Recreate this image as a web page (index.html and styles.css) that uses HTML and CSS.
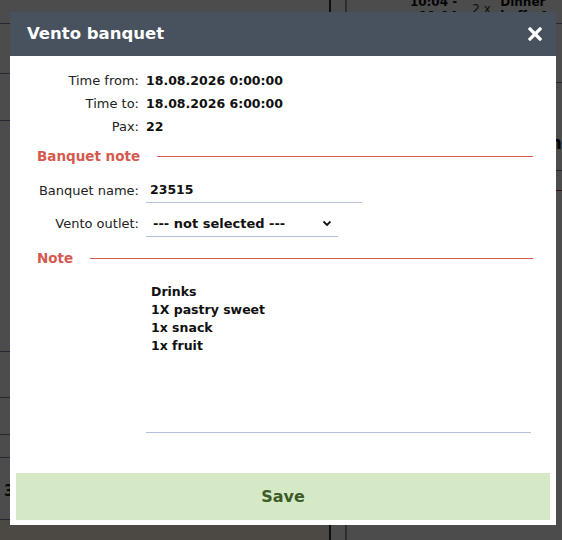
FILE: index.html
```html
<!DOCTYPE html>
<html lang="en">
<head>
  <meta charset="UTF-8">
  <meta name="viewport" content="width=device-width, initial-scale=1.0">
  <title>Vento banquet</title>
  <link rel="stylesheet" href="styles.css">
</head>
<body>
  <!-- schedule page behind the dialog -->
  <div class="page">
    <div class="col-left">
      <div class="row" style="height:24px"></div>
      <div class="row" style="height:50px"></div>
      <div class="row" style="height:47px"></div>
      <div class="row" style="height:231px"></div>
      <div class="row" style="height:46px"></div>
      <div class="row" style="height:37px"></div>
      <div class="row" style="height:23px"></div>
      <div class="row row-num" style="height:62px">3</div>
      <div class="row row-warm" style="height:60px"></div>
    </div>
    <div class="col-gap"></div>
    <div class="col-right">
      <div class="order">
        <div class="order-time">10:04 -<br>11:04</div>
        <div class="order-qty">2 x</div>
        <div class="order-name">Dinner<br>buffe A</div>
      </div>
      <div class="row" style="height:59px"><span class="faint">t</span></div>
      <div class="row" style="height:88px"><b>m</b></div>
      <div class="row row-red" style="height:20px"></div>
    </div>
  </div>

  <div class="overlay"></div>

  <div class="modal">
    <div class="modal-header">
      <h2>Vento banquet</h2>
      <button class="close" aria-label="Close">
        <svg width="14" height="14" viewBox="0 0 14 14"><path d="M2 2L12 12M12 2L2 12" stroke="#fff" stroke-width="3.2" stroke-linecap="square"/></svg>
      </button>
    </div>

    <div class="modal-body">
      <div class="info">
        <span class="label">Time from:</span><span class="value">18.08.2026 0:00:00</span>
        <span class="label">Time to:</span><span class="value">18.08.2026 6:00:00</span>
        <span class="label">Pax:</span><span class="value">22</span>
      </div>

      <div class="section">Banquet note</div>

      <div class="form-row form-row-first">
        <label class="label" for="name">Banquet name:</label>
        <input type="text" id="name" class="field field-name" value="23515">
      </div>
      <div class="form-row">
        <label class="label" for="outlet">Vento outlet:</label>
        <div class="select-wrap">
          <select id="outlet" class="field field-select">
            <option>--- not selected ---</option>
          </select>
          <svg class="chevron" width="10" height="7" viewBox="0 0 10 7"><path d="M1.5 1.5L5 5L8.5 1.5" fill="none" stroke="#111" stroke-width="1.8"/></svg>
        </div>
      </div>

      <div class="section section-note">Note</div>

      <textarea class="note">Drinks
1X pastry sweet
1x snack
1x fruit</textarea>

      <button class="btn-save">Save</button>
    </div>
  </div>
</body>
</html>
```

FILE: styles.css
```css
body {
  margin: 0;
  font-family: "DejaVu Sans", Verdana, sans-serif;
  color: #111;
  background: #fff;
  overflow: hidden;
}

/* page behind */
.page {
  display: flex;
  height: 540px;
  overflow: hidden;
}
.col-left {
  width: 339px;
  display: flex;
  flex-direction: column;
}
.col-gap {
  width: 15px;
  border-left: 2px solid #2a3550;
  border-right: 2px solid #8f9aae;
}
.col-right {
  flex: 1;
  display: flex;
  flex-direction: column;
}
.row {
  flex-shrink: 0;
  border-bottom: 1px solid #7a88a3;
  box-sizing: border-box;
  font-size: 15px;
}
.row-num {
  font-weight: bold;
  padding: 24px 0 0 4px;
}
.row-warm {
  border-bottom: none;
  background: #fff6e8;
}
.row-red {
  border-bottom-color: #a04040;
}
.faint {
  color: #777;
  margin-left: 196px;
  line-height: 70px;
  font-size: 16px;
}
.col-right b {
  margin-left: 196px;
  line-height: 120px;
  font-size: 18px;
}
.order {
  flex-shrink: 0;
  display: flex;
  height: 29px;
  border-bottom: 1px solid #7a88a3;
  box-sizing: border-box;
  font-size: 12px;
  line-height: 14px;
  margin-top: -5px;
}
.order-time {
  width: 110px;
  text-align: right;
  font-weight: bold;
}
.order-qty {
  width: 43px;
  padding: 7px 0 0 15px;
  box-sizing: border-box;
  color: #333;
}
.order-name {
  font-weight: bold;
}

.overlay {
  position: fixed;
  inset: 0;
  background: rgba(0, 0, 0, 0.7);
}

/* dialog */
.modal {
  position: absolute;
  left: 10px;
  top: 12px;
  width: 546px;
  background: #fff;
}
.modal-header {
  height: 44px;
  background: #48525f;
  display: flex;
  align-items: center;
  justify-content: space-between;
  padding: 0 14px 0 17px;
}
.modal-header h2 {
  margin: 0 0 2px;
  color: #fff;
  font-size: 16.5px;
  font-weight: bold;
}
.close {
  background: none;
  border: none;
  padding: 0;
  display: flex;
  cursor: pointer;
}

.modal-body {
  padding: 13px 6px 5px;
}
.info {
  display: grid;
  grid-template-columns: 123px 1fr;
  column-gap: 7px;
  line-height: 23px;
}
.label {
  font-size: 13px;
  text-align: right;
  color: #222;
}
.value {
  font-size: 12.5px;
  font-weight: bold;
}

.section {
  display: flex;
  align-items: center;
  gap: 17px;
  margin: 8px 17px 0 21px;
  height: 20px;
  font-size: 13.5px;
  font-weight: bold;
  color: #d45a4f;
}
.section::after {
  content: "";
  flex: 1;
  height: 0;
  border-top: 1px solid #d45a4f;
}
.section-note {
  margin-top: 11px;
}

.form-row {
  display: grid;
  grid-template-columns: 123px auto;
  column-gap: 7px;
  align-items: center;
  justify-content: start;
  margin-top: 7px;
}
.form-row-first {
  margin-top: 11px;
}
.field {
  font-family: inherit;
  font-size: 12.5px;
  font-weight: bold;
  color: #111;
  border: none;
  border-bottom: 1px solid #b4c0dc;
  background: #fff;
  outline: none;
  box-sizing: border-box;
}
.field-name {
  width: 216px;
  height: 26px;
  padding: 0 4px;
}
.select-wrap {
  position: relative;
  display: flex;
}
.field-select {
  width: 192px;
  height: 27px;
  padding: 0 0 0 7px;
  font-size: 13px;
  appearance: none;
  border-radius: 0;
}
.chevron {
  position: absolute;
  right: 6px;
  top: 10px;
  pointer-events: none;
}

.note {
  display: block;
  margin: 10px 0 0 130px;
  width: 385px;
  height: 155px;
  box-sizing: border-box;
  padding: 5px 5px;
  font-family: inherit;
  font-size: 12.5px;
  font-weight: bold;
  line-height: 18px;
  color: #111;
  border: none;
  border-bottom: 1px solid #b4c0dc;
  resize: none;
  outline: none;
}

.btn-save {
  display: block;
  width: 100%;
  height: 47px;
  margin-top: 40px;
  border: none;
  background: #d5e9c6;
  color: #3d5a28;
  font-family: inherit;
  font-size: 16px;
  font-weight: bold;
  cursor: pointer;
}
```
